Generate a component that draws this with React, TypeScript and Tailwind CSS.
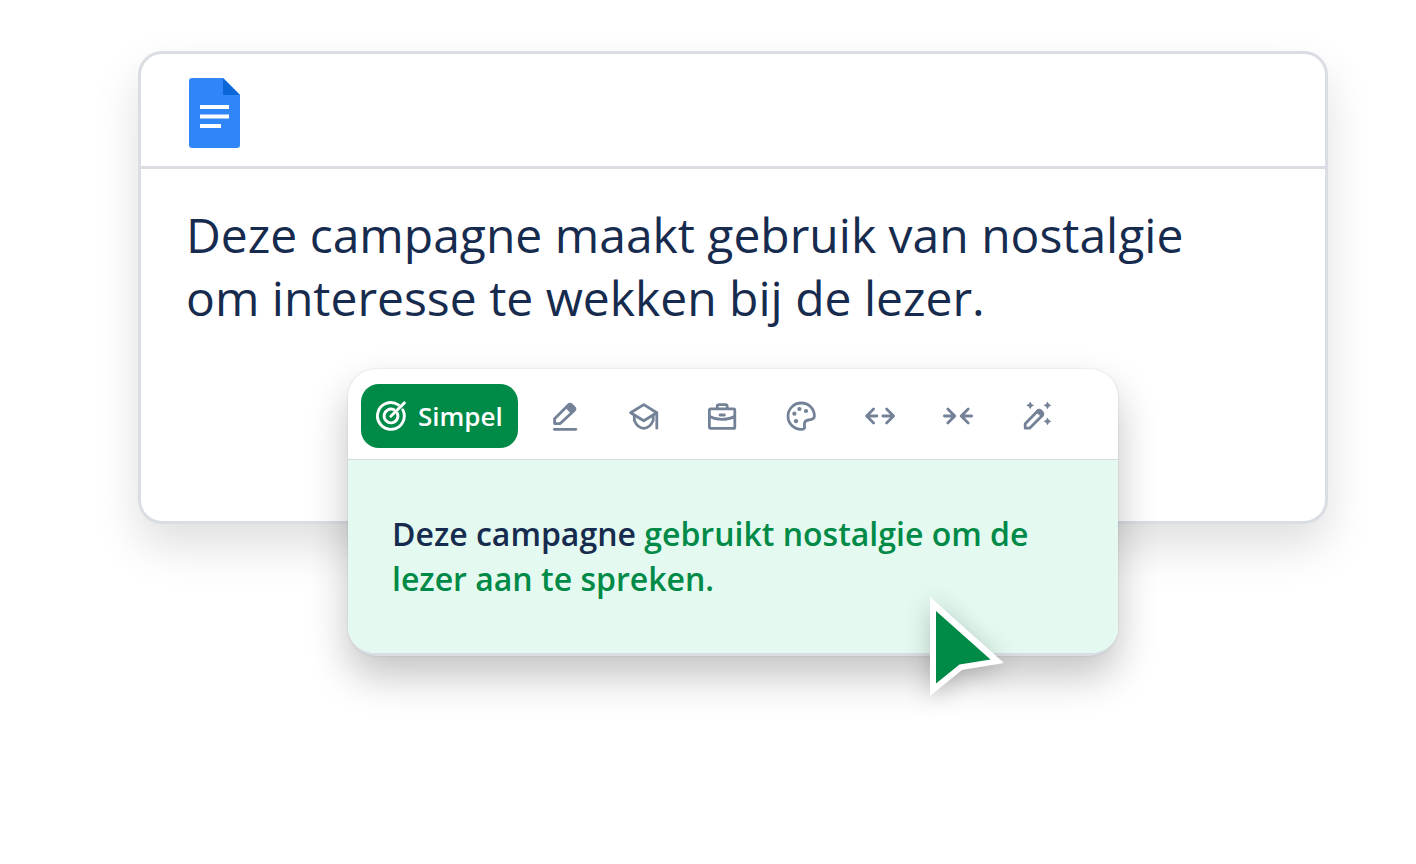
import { ReactNode, useState } from "react";

const tones: { id: string; label: string; icon: ReactNode }[] = [
  {
    id: "rewrite",
    label: "Herschrijven",
    icon: (
      <>
        <path d="M5.6 18.8 19.6 4.8Q21 3.4 22.4 4.8L25.2 7.6Q26.6 9 25.2 10.4L11.2 23.6H5.6Z" />
        <path d="M16.4 7.8 21 3.6 26.2 8.8 21.4 13.2Z" fill="currentColor" stroke="none" />
        <path d="M5.4 29.3H26.8" />
      </>
    ),
  },
  {
    id: "academic",
    label: "Academisch",
    icon: (
      <>
        <path d="M2.6 12.7 15.8 4.6 28.8 12.7 15.8 20.8Z" />
        <path d="M28.8 12.7V28.2" />
        <path d="M6.3 15.5V20.5Q9.8 28.3 15.8 28.3T25.2 20.5V15.5" />
      </>
    ),
  },
  {
    id: "business",
    label: "Zakelijk",
    icon: (
      <>
        <rect x="3.4" y="8.8" width="25.4" height="19.6" rx="1.2" />
        <path d="M11.2 8.6V6.4Q11.2 4.6 13 4.6H19.4Q21.2 4.6 21.2 6.4V8.6" />
        <path d="M3.6 16.4Q9 19.4 16 19.4T28.6 16.4" />
        <path d="M14 15H18.4" />
      </>
    ),
  },
  {
    id: "creative",
    label: "Creatief",
    icon: (
      <>
        <path d="M16.2 3A13.2 13.2 0 1 0 16.2 29.4Q19.4 29.4 19.6 27.6C19.8 25.8 19 25 19.6 22.8Q20.4 20.4 23.4 20C27 19.6 29.4 18.8 29.4 16C29.4 8.6 23.6 3 16.2 3Z" />
        <g fill="currentColor" stroke="none">
          <circle cx="14.4" cy="9" r="2.1" />
          <circle cx="21" cy="11" r="2.1" />
          <circle cx="9.4" cy="13.7" r="2.1" />
          <circle cx="11" cy="21.2" r="2.1" />
        </g>
      </>
    ),
  },
  {
    id: "longer",
    label: "Langer",
    icon: <path d="M12.9 16H2.8M9.6 9 2.6 16 9.6 23M18.9 16H29.2M22.6 9 29.6 16 22.6 23" />,
  },
  {
    id: "shorter",
    label: "Korter",
    icon: <path d="M2.4 16H12.4M5.8 9 12.8 16 5.8 23M29.6 16H19.6M26.2 9 19.2 16 26.2 23" />,
  },
  {
    id: "magic",
    label: "Aangepast",
    icon: (
      <>
        <path d="M4.2 23.8 16.4 11.2Q18.2 9.4 20 11.2L20.8 12Q22.6 14 20.8 16L8.6 28.2H4.2Z" />
        <path d="M14.2 11.4Q18 7.6 21.6 10.8T21 17.8Z" fill="currentColor" stroke="none" />
        <g fill="currentColor" stroke="none">
          <path d="M9.2 1.4 10.6 3.9 13.1 5.3 10.6 6.7 9.2 9.2 7.8 6.7 5.3 5.3 7.8 3.9Z" />
          <path d="M26.5 1.4 27.9 3.9 30.4 5.3 27.9 6.7 26.5 9.2 25.1 6.7 22.6 5.3 25.1 3.9Z" />
          <path d="M26.5 17.4 27.9 19.9 30.4 21.3 27.9 22.7 26.5 25.2 25.1 22.7 22.6 21.3 25.1 19.9Z" />
        </g>
      </>
    ),
  },
];

const DocIcon = () => (
  <svg width="51" height="70" viewBox="0 0 51 70" aria-hidden="true">
    <path d="M3 0H34L51 17V67Q51 70 48 70H3Q0 70 0 67V3Q0 0 3 0Z" fill="#3086f6" />
    <path d="M34 0 51 17H34Z" fill="#0c67d6" />
    <path d="M11 27H40V31H11ZM11 36.5H40V40.5H11ZM11 46H32V50H11Z" fill="#fff" />
  </svg>
);

const TargetIcon = () => (
  <svg
    width="32"
    height="32"
    viewBox="0 0 32 32"
    fill="none"
    stroke="currentColor"
    strokeWidth="2.9"
    strokeLinecap="round"
    aria-hidden="true"
  >
    <path d="M23.4 4.9A13.4 13.4 0 1 0 27.8 9.9" />
    <path d="M18.8 9.7A6.9 6.9 0 1 0 22.4 13.4" />
    <path d="M15.8 16.2 29.4 2.9" />
  </svg>
);

const Cursor = () => (
  <svg
    className="absolute right-[114px] -bottom-10 overflow-visible drop-shadow-[0_4px_12px_rgba(0,0,0,0.22)]"
    width="74"
    height="99"
    viewBox="0 0 74 99"
    aria-hidden="true"
  >
    <path d="M0 0 74 66 32 73 0 99Z" fill="#fff" />
    <path d="M6 14 60.5 62.5 29.5 67.5 6 86.5Z" fill="#008a47" />
  </svg>
);

const ToneToolbar = () => {
  const [selected, setSelected] = useState("simple");

  return (
    <div className="flex items-center gap-2 border-b border-[#d5dcda] px-[13px] pt-[15px] pb-[11px]">
      <button
        type="button"
        aria-pressed={selected === "simple"}
        onClick={() => setSelected("simple")}
        className="flex h-16 w-[157px] shrink-0 items-center gap-[11px] rounded-[18px] bg-[#008a47] pl-[14px] text-[26px] font-semibold text-white"
      >
        <TargetIcon />
        Simpel
      </button>
      <div className="flex w-[550px]">
        {tones.map((tone) => (
          <button
            key={tone.id}
            type="button"
            aria-label={tone.label}
            aria-pressed={selected === tone.id}
            onClick={() => setSelected(tone.id)}
            className="flex h-16 flex-1 items-center justify-center text-[#748297]"
          >
            <svg
              width="32"
              height="32"
              viewBox="0 0 32 32"
              fill="none"
              stroke="currentColor"
              strokeWidth="2.8"
              strokeLinecap="round"
              strokeLinejoin="round"
            >
              {tone.icon}
            </svg>
          </button>
        ))}
      </div>
    </div>
  );
};

const App = () => {
  return (
    <main className="min-h-screen bg-white pt-[51px] pr-[88px] pb-16 pl-[138px] font-['Open_Sans',sans-serif] text-[#162b4e]">
      <section className="rounded-[24px] border-[3px] border-[#dadee4] bg-white pb-[192px] shadow-[0_22px_46px_rgba(0,0,0,0.13)]">
        <header className="border-b-[3px] border-[#dadee4] px-12 pt-6 pb-[18px]">
          <DocIcon />
        </header>
        <p className="max-w-[1120px] px-[45px] pt-[34px] text-[48px] leading-[63px]">
          Deze campagne maakt gebruik van nostalgie om interesse te wekken bij de lezer.
        </p>
      </section>

      <section className="relative mx-auto -mt-[155px] w-full max-w-[770px]">
        <div className="overflow-hidden rounded-[28px] border-b-[3px] border-[#d7dde2] bg-white shadow-[0_0_2px_rgba(0,0,0,0.15),0_20px_40px_rgba(0,0,0,0.24)]">
          <ToneToolbar />
          <p className="bg-[#e4faf0] px-11 pt-[51px] pb-[52px] text-[32px] leading-[45px] font-semibold text-[#008a47]">
            <span className="text-[#162b4e]">Deze campagne</span>{" "}
            <span>gebruikt nostalgie om de</span>
            <br />
            <span>lezer aan te spreken.</span>
          </p>
        </div>
        <Cursor />
      </section>
    </main>
  );
};

export default App;
